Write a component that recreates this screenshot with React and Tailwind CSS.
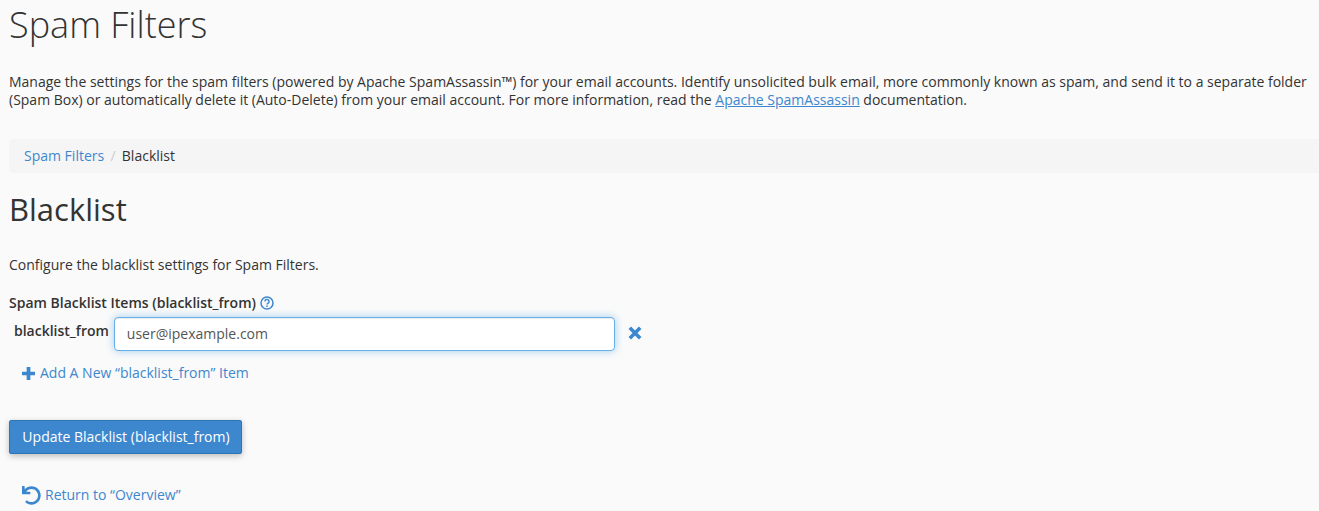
function HelpIcon() {
  return (
    <svg viewBox="0 0 14 14" className="ml-1 h-3.5 w-3.5 text-[#3d87cf]" fill="none" stroke="currentColor">
      <circle cx="7" cy="7" r="6" strokeWidth="1.5" />
      <path d="M5 5.5a2 2 0 1 1 3.1 1.6c-.7.4-1.1.7-1.1 1.4" strokeWidth="1.5" />
      <path d="M7 9.5v1.5" strokeWidth="1.6" />
    </svg>
  )
}

function UndoIcon() {
  return (
    <svg viewBox="0 0 512 512" className="h-[19px] w-[19px] text-[#3d87cf]" fill="currentColor">
      <path d="M212.333 224.333H12c-6.627 0-12-5.373-12-12V12C0 5.373 5.373 0 12 0h48c6.627 0 12 5.373 12 12v78.112C117.773 39.279 184.26 7.47 258.175 8.007c136.906.994 246.448 111.623 246.157 248.532C504.041 393.258 393.12 504 256.333 504c-64.089 0-122.496-24.313-166.51-64.215-5.099-4.622-5.334-12.554-.467-17.42l33.967-33.967c4.474-4.474 11.662-4.717 16.401-.525C170.76 415.336 211.58 432 256.333 432c97.268 0 176-78.716 176-176 0-97.267-78.716-176-176-176-58.496 0-110.28 28.476-142.274 72.333h98.274c6.627 0 12 5.373 12 12v48c0 6.627-5.373 12-12 12z" />
    </svg>
  )
}

function TimesIcon() {
  return (
    <svg viewBox="0 0 14 14" className="h-[14px] w-[14px] text-[#3d87cf]" fill="none" stroke="currentColor" strokeWidth="3.6">
      <path d="M1.8 1.8l10.4 10.4M12.2 1.8L1.8 12.2" />
    </svg>
  )
}

function PlusIcon() {
  return (
    <svg viewBox="0 0 14 14" className="h-[13px] w-[13px] text-[#3d87cf]" fill="currentColor">
      <path d="M5 0h4v5h5v4H9v5H5V9H0V5h5z" />
    </svg>
  )
}

export default function App() {
  return (
    <div className="h-[511px] overflow-hidden bg-[#fafafa] pl-[9px] font-['Open_Sans',sans-serif] text-[14px] leading-[20px] text-[#333]">
      <h1 className="text-[36px] leading-[50px] font-light">Spam Filters</h1>
      <p className="mt-[23px] leading-[18px]">
        Manage the settings for the spam filters (powered by Apache SpamAssassin™) for your email accounts. Identify unsolicited bulk email, more commonly known as spam, and send it to a separate folder (Spam Box) or automatically delete it (Auto-Delete) from your email account. For more information, read the{' '}
        <a className="text-[#3d87cf] underline">Apache SpamAssassin</a> documentation.
      </p>

      <nav className="mt-[30px] flex h-[34px] items-center rounded-l bg-[#f5f5f5] pl-[15px]">
        <a className="text-[#3d87cf]">Spam Filters</a>
        <span className="px-[6.25px] text-[#ccc]">/</span>
        <span>Blacklist</span>
      </nav>

      <h2 className="mt-[16px] text-[31px] leading-[40px] font-normal">Blacklist</h2>
      <p className="mt-[26px]">Configure the blacklist settings for Spam Filters.</p>

      <div className="mt-[18px] flex items-center font-semibold">
        Spam Blacklist Items (blacklist_from)
        <HelpIcon />
      </div>
      <div className="mt-[4px] flex items-start">
        <label className="mt-[4px] ml-[5px] font-semibold">blacklist_from</label>
        <input
          readOnly
          value="user@ipexample.com"
          className="ml-[5px] h-[34px] w-[501px] rounded border border-[#66afe9] bg-white px-3 pb-[2px] text-[#555] shadow-[inset_0_1px_1px_rgba(0,0,0,0.075),0_0_8px_rgba(102,175,233,0.6)] outline-none"
        />
        <span className="mt-[9px] ml-[13px]"><TimesIcon /></span>
      </div>

      <a className="mt-[12px] ml-[13px] flex items-center gap-[5px] text-[#3d87cf]">
        <PlusIcon />
        Add A New “blacklist_from” Item
      </a>

      <button className="mt-[37px] block h-[34px] w-[233px] rounded-xs border border-[#2e75b6] bg-[#3d87cf] pl-px text-white shadow-[0_2px_6px_rgba(0,0,0,0.25)]">
        Update Blacklist (blacklist_from)
      </button>

      <a className="mt-[31px] ml-[13px] flex items-center gap-[4px] text-[#3d87cf]">
        <UndoIcon />
        Return to “Overview”
      </a>
    </div>
  )
}
